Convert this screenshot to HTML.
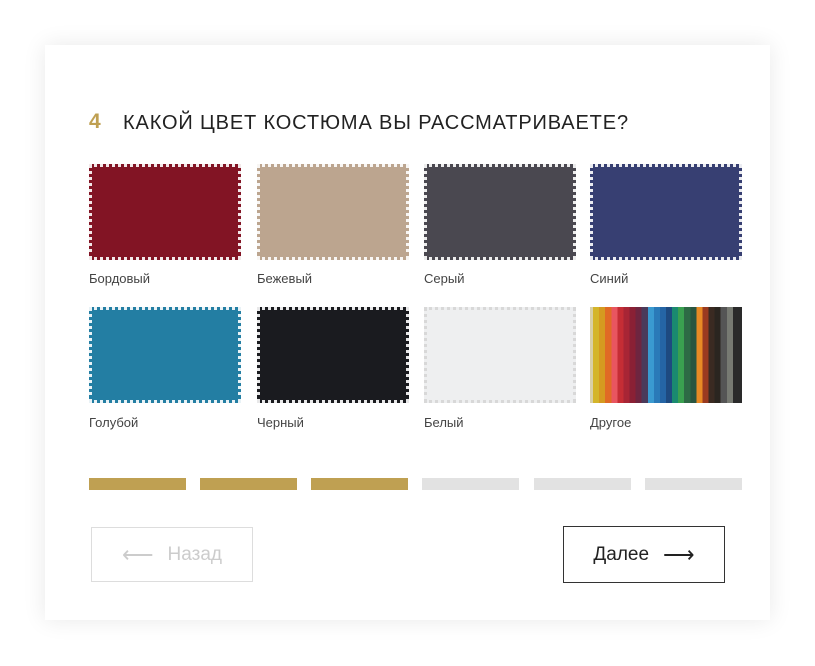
<!DOCTYPE html><html><head><meta charset="utf-8"><style>
body{margin:0;width:815px;height:666px;background:#fff;font-family:"Liberation Sans",sans-serif;position:relative;overflow:hidden}
.card{position:absolute;left:45px;top:45px;width:725px;height:575px;background:#fff;box-shadow:0 0 22px rgba(0,0,0,.09)}
.num{position:absolute;left:89px;top:110px;color:#bfa052;font-size:21px;font-weight:bold}
.title{position:absolute;left:123px;top:112px;font-size:20px;color:#222;letter-spacing:0.85px}
.sw{position:absolute;width:146px;height:90px;border:3px dotted rgba(255,255,255,.9)}
.lb{position:absolute;font-size:13px;color:#444}
.bar{position:absolute;top:478px;height:12px;width:97px}
.btn{position:absolute;box-sizing:border-box;font-size:19px;display:flex;align-items:center;justify-content:center}
</style></head><body>
<div class="card"></div>
<div class="num">4</div>
<div class="title">КАКОЙ ЦВЕТ КОСТЮМА ВЫ РАССМАТРИВАЕТЕ?</div>
<div class="sw" style="left:89px;top:164px;background:#821424"></div>
<div class="sw" style="left:257px;top:164px;background:#bca58f"></div>
<div class="sw" style="left:424px;top:164px;background:#4a4850"></div>
<div class="sw" style="left:590px;top:164px;background:#373f72"></div>
<div class="lb" style="left:89px;top:271px">Бордовый</div>
<div class="lb" style="left:257px;top:271px">Бежевый</div>
<div class="lb" style="left:424px;top:271px">Серый</div>
<div class="lb" style="left:590px;top:271px">Синий</div>
<div class="sw" style="left:89px;top:307px;background:#237ea3"></div>
<div class="sw" style="left:257px;top:307px;background:#1a1b1f"></div>
<div class="sw" style="left:424px;top:307px;background:#eeeff0;border-color:#d8d8d8"></div>
<div style="position:absolute;left:590px;top:307px;width:152px;height:96px;background:linear-gradient(90deg,#d8cfa8 0 2%,#d4b52a 2% 6%,#d59a20 6% 10%,#e06a25 10% 14%,#e85560 14% 18%,#c52d35 18% 22%,#a82535 22% 26%,#8a2035 26% 30%,#6e2540 30% 34%,#4a3a5a 34% 38%,#3a9ad0 38% 42%,#2a7ab8 42% 46%,#2565a5 46% 50%,#1e4a80 50% 54%,#1a8a70 54% 58%,#3aa050 58% 62%,#2d6a45 62% 66%,#2a5540 66% 70%,#e88a25 70% 74%,#9a3a20 74% 78%,#3a2a22 78% 82%,#2a2520 82% 86%,#555 86% 90%,#777a72 90% 94%,#2a2a2a 94% 100%)"></div>
<div class="lb" style="left:89px;top:415px">Голубой</div>
<div class="lb" style="left:257px;top:415px">Черный</div>
<div class="lb" style="left:424px;top:415px">Белый</div>
<div class="lb" style="left:590px;top:415px">Другое</div>
<div class="bar" style="left:89px;background:#bfa052"></div>
<div class="bar" style="left:200px;background:#bfa052"></div>
<div class="bar" style="left:311px;background:#bfa052"></div>
<div class="bar" style="left:422px;background:#e2e2e2"></div>
<div class="bar" style="left:534px;background:#e2e2e2"></div>
<div class="bar" style="left:645px;background:#e2e2e2"></div>
<div class="btn" style="left:91px;top:527px;height:55px;width:162px;border:1px solid #ddd;color:#ccc"><span style="font-size:22px;margin-right:14px">⟵</span>Назад</div>
<div class="btn" style="left:563px;top:526px;height:57px;width:162px;border:1px solid #333;color:#222">Далее<span style="font-size:22px;margin-left:14px">⟶</span></div>
</body></html>
